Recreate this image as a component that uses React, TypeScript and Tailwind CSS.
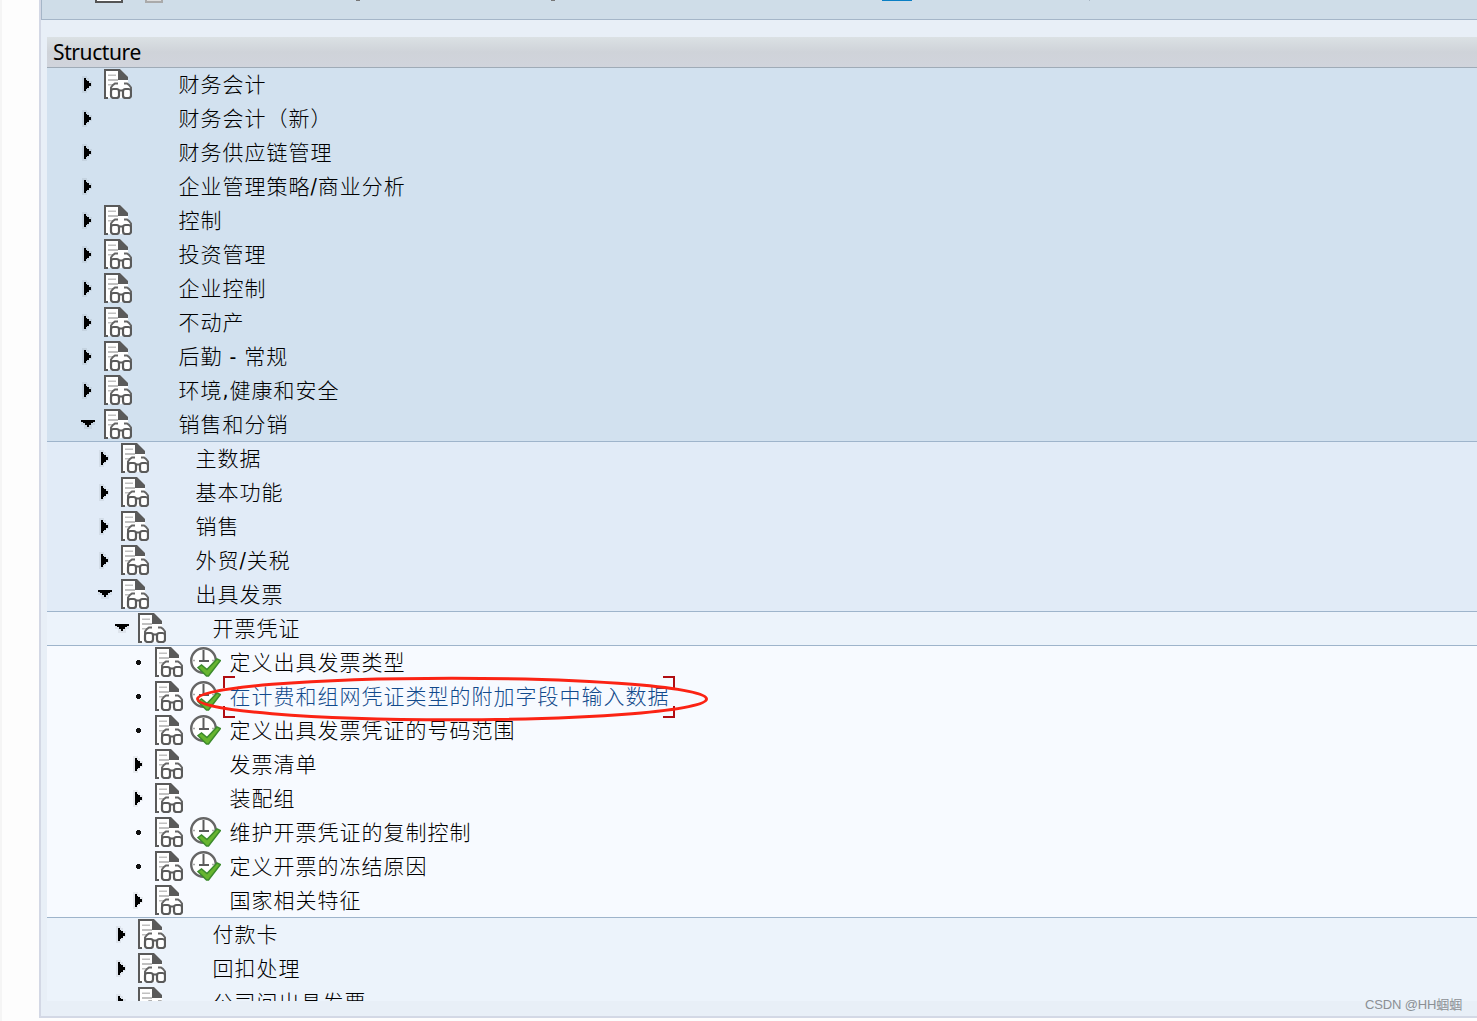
type Kind = 'closed' | 'open' | 'leaf'

type Node = {
  label: string
  level: 0 | 1 | 2 | 3
  kind?: Kind
  doc?: boolean
  activity?: boolean
  selected?: boolean
  line?: boolean
}

const nodes: Node[] = [
  { label: '财务会计', level: 0 },
  { label: '财务会计（新）', level: 0, doc: false },
  { label: '财务供应链管理', level: 0, doc: false },
  { label: '企业管理策略/商业分析', level: 0, doc: false },
  { label: '控制', level: 0 },
  { label: '投资管理', level: 0 },
  { label: '企业控制', level: 0 },
  { label: '不动产', level: 0 },
  { label: '后勤 - 常规', level: 0 },
  { label: '环境,健康和安全', level: 0 },
  { label: '销售和分销', level: 0, kind: 'open', line: true },
  { label: '主数据', level: 1 },
  { label: '基本功能', level: 1 },
  { label: '销售', level: 1 },
  { label: '外贸/关税', level: 1 },
  { label: '出具发票', level: 1, kind: 'open', line: true },
  { label: '开票凭证', level: 2, kind: 'open', line: true },
  { label: '定义出具发票类型', level: 3, kind: 'leaf', activity: true },
  { label: '在计费和组网凭证类型的附加字段中输入数据', level: 3, kind: 'leaf', activity: true, selected: true },
  { label: '定义出具发票凭证的号码范围', level: 3, kind: 'leaf', activity: true },
  { label: '发票清单', level: 3 },
  { label: '装配组', level: 3 },
  { label: '维护开票凭证的复制控制', level: 3, kind: 'leaf', activity: true },
  { label: '定义开票的冻结原因', level: 3, kind: 'leaf', activity: true },
  { label: '国家相关特征', level: 3, line: true },
  { label: '付款卡', level: 2 },
  { label: '回扣处理', level: 2 },
  { label: '公司间出具发票', level: 2 },
]

const levelStyles = [
  'bg-[#d2e1ef] pl-[31px]',
  'bg-[#e1ebf7] pl-[48px]',
  'bg-[#ecf3fb] pl-[65px]',
  'bg-[#f7faff] pl-[82px]',
]

function Marker({ kind }: { kind: Kind }) {
  return (
    <svg width="26" height="34" viewBox="0 0 26 34" className="shrink-0" shapeRendering="crispEdges">
      {kind === 'closed' && (
        <>
          <path d="M4 8h5v2h2v3h3v6h-3v3H9v3H4z" fill="#000" opacity=".06" />
          <path d="M6 10h2v2h1v1h2v2h2v3h-2v2H9v1H8v2H6z" fill="#000" />
        </>
      )}
      {kind === 'open' && (
        <>
          <path d="M3 13h14v4h-3v4H6v-4H3z" fill="#000" opacity=".06" />
          <path d="M3 12h14v2h-2v1h-2v2h-2v2H9v-2H7v-2H5v-1H3z" fill="#000" />
        </>
      )}
      {kind === 'leaf' && <path d="M8 14h3v1h1v3h-1v1H8v-1H7v-3h1z" fill="#111" />}
    </svg>
  )
}

// document with reading glasses
function DocIcon() {
  return (
    <svg width="28" height="30" viewBox="0 0 28 30" className="mt-px shrink-0">
      <path d="M0 0h16l8 9v7l3 4v9H0z" fill="#fff" />
      <path d="M0 0h16v2H2v26h2v2H0z" fill="#5a5a5a" />
      <path d="M14 0h2l8 8v3H14z" fill="#5a5a5a" />
      <path d="M4 5.500h8V7H4zM4 10h10v2H4zM4 15h5v1.500H4z" fill="#c0c0c0" />
      <path
        d="M7 22v-3.500l2-2.500 2-1.500h3M27 22v-3.500L25 16l-2-1.500h-3"
        fill="none"
        stroke="#666"
        strokeWidth="2"
      />
      <rect x="7" y="20" width="8" height="9" rx="2.500" fill="#fff" stroke="#5a5a5a" strokeWidth="2.200" />
      <rect x="19" y="20" width="8" height="9" rx="2.500" fill="#fff" stroke="#5a5a5a" strokeWidth="2.200" />
      <path d="M14 20.500h6v2h-6z" fill="#5a5a5a" />
    </svg>
  )
}

// clock with a green check mark
function ActivityIcon() {
  return (
    <svg width="31" height="31" viewBox="0 0 31 31" className="ml-[7px] mt-px shrink-0">
      <circle cx="13.5" cy="13.5" r="12.3" fill="#fff" stroke="#666" strokeWidth="2.4" />
      <path d="M13.500 3v12M9 14h10" stroke="#5c5c5c" strokeWidth="2" fill="none" />
      <path d="M3 13.500h2M22 13.500h2" stroke="#aaa" strokeWidth="1.5" />
      <path d="M8 20.500l3.500-2.500 5.500 4.500L27 12l3.500 1.500L18.500 29h-2z" fill="#67b52f" stroke="#3c8a2c" strokeWidth="1.500" />
    </svg>
  )
}

function SelectionMark() {
  return (
    <svg
      width="520"
      height="48"
      viewBox="0 0 520 48"
      fill="none"
      className="pointer-events-none absolute -left-[36px] -top-[6px] z-10"
    >
      <path
        d="M42 3H31v11M31 32v11h11M470 3h11v11M470 43h11V32"
        stroke="#b00d12"
        strokeWidth="2"
      />
      <ellipse cx="259" cy="25" rx="254.5" ry="20.8" stroke="#fb2314" strokeWidth="3" />
    </svg>
  )
}

function TreeRow({ node }: { node: Node }) {
  const { label, level, kind = 'closed', doc = true, activity, selected, line } = node
  return (
    <div
      className={`flex h-[34px] shrink-0 items-start ${levelStyles[level]} ${line ? 'border-b border-[#9eb4cb]' : ''}`}
    >
      <Marker kind={kind} />
      <div className="flex w-[74px] shrink-0">
        {doc && <DocIcon />}
        {activity && <ActivityIcon />}
      </div>
      <div className={`relative whitespace-nowrap ${selected ? 'text-[#124a8c]' : 'text-black'}`}>
        <span className="pl-[0.5px]">{label}</span>
        {selected && <SelectionMark />}
      </div>
    </div>
  )
}

function Toolbar() {
  return (
    <div className="flex h-5 items-start border-b border-l border-[#a5b6c8] bg-[#cfdde8]">
      <div className="ml-[53px] h-[3px] w-[28px] border-2 border-t-0 border-[#555] bg-white" />
      <div className="ml-[22px] h-[3px] w-[18px] border-2 border-t-0 border-[#aaa] bg-[#ddd]" />
      <div className="ml-[193px] h-px w-1 bg-[#777]" />
      <div className="ml-[191px] h-px w-1 bg-[#777]" />
      <div className="ml-[327px] h-px w-[30px] bg-[#0a7fc4]" />
      <div className="ml-[177px] h-px w-px bg-[#a9b7c4]" />
    </div>
  )
}

export default function App() {
  return (
    <div className="relative flex h-[1021px] w-[1477px] overflow-hidden bg-[#fdfdfd]">
      <div className="w-[2px] shrink-0 bg-[#f5f5f5]" />
      <div className="ml-[37px] flex h-[1018px] flex-1 flex-col border-b-2 border-l-2 border-[#d3d8e5] bg-[#e8eff7]">
        <Toolbar />
        <div className="ml-[6px] mt-[17px] flex h-[31px] shrink-0 items-center border-b border-[#9fabb7] bg-linear-to-b from-[#dbe1e4] via-[#cfd3d9] to-[#d1d4dc] pl-[6px] font-['Noto_Sans'] text-[21px] leading-[30px] text-black">
          <span className="tracking-[-0.4px]">Structure</span>
        </div>
        <div className="ml-[6px] flex h-[933px] flex-col overflow-hidden font-['DejaVu_Sans_Condensed','Noto_Sans_CJK_SC',sans-serif] text-[21px] font-light leading-[35px] tracking-[1px]">
          {nodes.map((node) => (
            <TreeRow key={node.label} node={node} />
          ))}
        </div>
      </div>
      <div className="absolute bottom-[6px] right-[15px] font-['Liberation_Sans','Noto_Sans_CJK_SC',sans-serif] text-[13px] leading-5 tracking-[-0.15px] text-[#8b8f94]">
        CSDN @HH蝈蝈
      </div>
    </div>
  )
}
